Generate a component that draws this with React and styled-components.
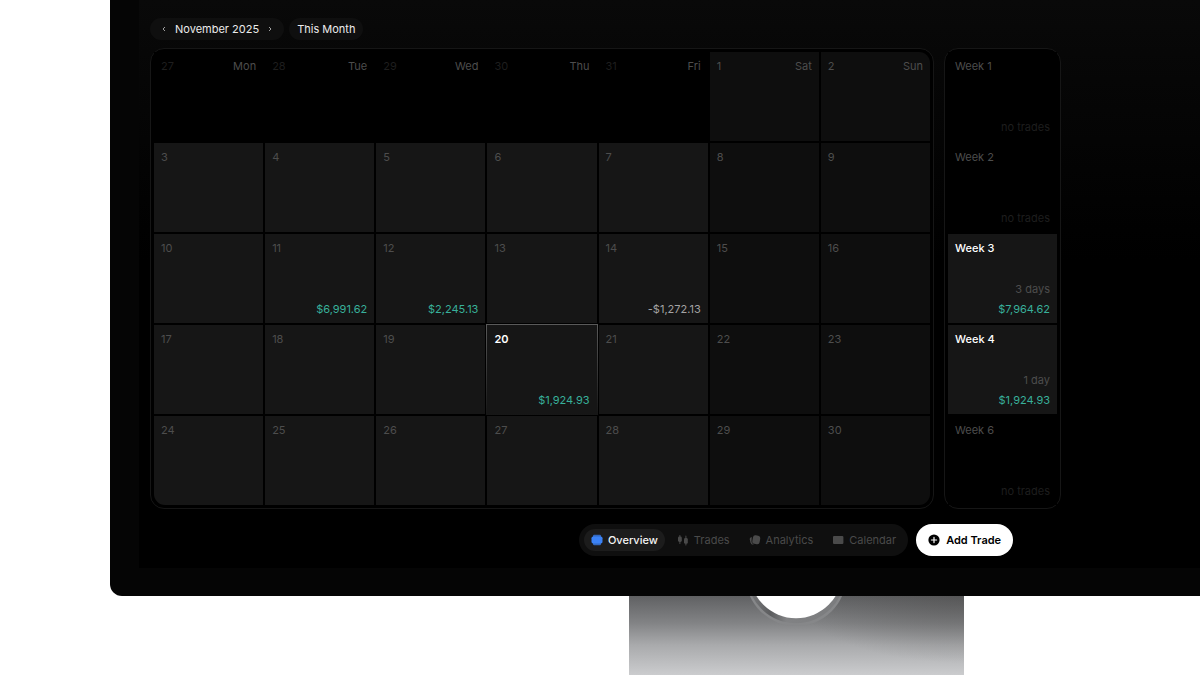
import React from "react";
import styled, { createGlobalStyle, css } from "styled-components";

const GlobalStyle = createGlobalStyle`
  *, *::before, *::after { box-sizing: border-box; }
  body {
    margin: 0;
    background: #fff;
    font-family: Inter, "Liberation Sans", sans-serif;
    font-size: 11px;
    line-height: 16px;
  }
  button { font: inherit; border: 0; cursor: pointer; }
  ol, ul { list-style: none; margin: 0; padding: 0; }
`;

const Page = styled.div`
  min-height: 100vh;
  overflow: hidden;
  display: flex;
  flex-direction: column;
`;

const Display = styled.div`
  flex: 1;
  display: flex;
  flex-direction: column;
  margin: 0 -282px 0 110px;
`;

const Bezel = styled.div`
  padding: 0 29px 28px;
  background: #050505;
  border-radius: 0 0 12px 12px;
`;

const Screen = styled.main`
  display: flex;
  flex-direction: column;
  padding: 18px 0 12px;
  background: linear-gradient(#090909 0, #060606 80px, #000 260px);
`;

const Toolbar = styled.header`
  display: flex;
  gap: 5px;
  padding: 0 11px;
  margin-bottom: 8px;
`;

const Pill = styled.div`
  display: flex;
  align-items: center;
  gap: 5px;
  height: 22px;
  padding: 0 8px;
  border-radius: 11px;
  background: #0f0f0f;
  color: #ececec;
`;

const Arrow = styled.button`
  display: flex;
  align-items: center;
  justify-content: center;
  width: 12px;
  height: 16px;
  padding: 0;
  background: none;
  color: #a0a0a0;
`;

const Board = styled.div`
  display: flex;
  gap: 10px;
  padding: 0 392px 0 11px;
`;

const Panel = styled.ol`
  && { padding: 3px; }
  display: grid;
  grid-auto-rows: 89px;
  gap: 2px;
  border: 1px solid #161616;
  border-radius: 14px;
  background: #000;
`;

const Month = styled(Panel)`
  flex: 1;
  grid-template-columns: repeat(7, minmax(0, 1fr));
`;

const Weeks = styled(Panel)`
  flex: 0 0 117px;
`;

const cellColors = { outside: "#000", weekday: "#161616", weekend: "#0e0e0e" };

const corners = {
  tr: "0 11px 0 0",
  bl: "0 0 0 11px",
  br: "0 0 11px 0",
};

const Cell = styled.li`
  display: flex;
  flex-direction: column;
  justify-content: space-between;
  padding: 6px 7px;
  background: ${(p) => cellColors[p.$kind]};
  border-radius: ${(p) => corners[p.$corner] || "0"};
  color: #4d4d4d;
  ${(p) =>
    p.$today &&
    css`
      background:
        linear-gradient(#161616, #161616) padding-box,
        linear-gradient(#5a5a5a, #161616) border-box;
      border: 1px solid transparent;
      margin: -1px;
    `}
`;

const CellHead = styled.div`
  display: flex;
  justify-content: space-between;
`;

const DayNumber = styled.time`
  color: ${(p) => (p.$today ? "#fff" : p.$dim ? "#1e1e1e" : "#4d4d4d")};
  font-weight: ${(p) => (p.$today ? 600 : 400)};
`;

const Weekday = styled.span`
  color: #4d4d4d;
`;

const Amount = styled.span`
  text-align: right;
  color: ${(p) => (p.$loss ? "#a3a3a3" : "#38b09a")};
`;

const WeekTitle = styled.span`
  color: ${(p) => (p.$active ? "#fff" : "#4d4d4d")};
  font-weight: ${(p) => (p.$active ? 500 : 400)};
`;

const WeekFoot = styled.div`
  display: flex;
  flex-direction: column;
  gap: 4px;
  text-align: right;
`;

const WeekNote = styled.span`
  color: ${(p) => (p.$active ? "#4d4d4d" : "#1e1e1e")};
`;

const Dock = styled.div`
  display: flex;
  justify-content: center;
  gap: 8px;
  margin-top: 15px;
`;

const Nav = styled.nav`
  display: flex;
  align-items: center;
  height: 32px;
  padding: 0 5px;
  gap: 5px;
  border-radius: 16px;
  background: #0f0f0f;
`;

const Tab = styled.button`
  display: flex;
  align-items: center;
  gap: 5px;
  height: 22px;
  padding: 0 7px;
  border-radius: 11px;
  background: ${(p) => (p.$active ? "#1c1c1c" : "transparent")};
  color: ${(p) => (p.$active ? "#f4f4f4" : "#4a4a4a")};
  font-weight: ${(p) => (p.$active ? 500 : 400)};
`;

const AddButton = styled.button`
  display: flex;
  align-items: center;
  gap: 6px;
  height: 32px;
  padding: 0 12px;
  border-radius: 16px;
  background: #fff;
  color: #000;
  font-weight: 600;
`;

const Stand = styled.div`
  flex: 1;
  align-self: center;
  display: flex;
  justify-content: center;
  align-items: flex-start;
  width: 335px;
  min-height: 79px;
  background:
    radial-gradient(ellipse 50% 85% at 100% 0, rgba(72, 71, 70, 0.4), transparent),
    linear-gradient(#606163, #828385 34%, #a9aaac 62%, #cbccce);
`;

const Chevron = ({ d }) => (
  <svg width="6" height="6" viewBox="0 0 6 6" fill="none" stroke="currentColor" aria-hidden="true">
    <path d={d} />
  </svg>
);

const OverviewIcon = () => (
  <svg width="12" height="12" viewBox="0 0 12 12" fill="#3b82f6" aria-hidden="true">
    <rect x="2" y="0.8" width="8" height="10.4" rx="1.2" opacity="0.75" />
    <rect x="0.5" y="2.6" width="11" height="6.8" rx="1.6" />
  </svg>
);

const TradesIcon = () => (
  <svg width="12" height="12" viewBox="0 0 12 12" fill="currentColor" aria-hidden="true">
    <rect x="1" y="2.5" width="3.8" height="5.5" rx="1.4" />
    <rect x="2.4" y="1" width="1" height="9" rx="0.5" />
    <rect x="7" y="4" width="3.8" height="5.8" rx="1.4" />
    <rect x="8.4" y="1.5" width="1" height="10" rx="0.5" />
  </svg>
);

const AnalyticsIcon = () => (
  <svg width="12" height="12" viewBox="0 0 12 12" fill="currentColor" aria-hidden="true">
    <rect x="3.6" y="1.4" width="7.4" height="8.6" rx="2.4" transform="rotate(10 7.3 5.7)" />
    <path d="M2.8 3Q.6 3.400.7 5L1.400 8.400Q2 10.800 4.800 10.700 2.400 9.600 2.500 7.200Z" />
  </svg>
);

const CalendarIcon = () => (
  <svg width="12" height="12" viewBox="0 0 12 12" fill="currentColor" aria-hidden="true">
    <rect x="1" y="2" width="10.4" height="8" rx="1" />
  </svg>
);

const PlusIcon = () => (
  <svg width="12" height="12" viewBox="0 0 12 12" aria-hidden="true">
    <circle cx="6" cy="6" r="5.6" fill="#000" />
    <path d="M6 3.4v5.2M3.4 6h5.2" stroke="#fff" strokeWidth="1.2" strokeLinecap="round" />
  </svg>
);

const StandHole = () => (
  <svg width="100" height="32" viewBox="0 0 100 32" aria-hidden="true">
    <defs>
      <linearGradient id="rim" x1="0" x2="1">
        <stop offset="0" stopColor="#77787a" />
        <stop offset="0.12" stopColor="#6c6d6f" />
        <stop offset="0.24" stopColor="#5c5d5f" />
        <stop offset="0.4" stopColor="#818284" />
        <stop offset="1" stopColor="#7a7b7d" />
      </linearGradient>
    </defs>
    <circle cx="50" cy="-20.5" r="50.5" fill="#868789" />
    <circle cx="50" cy="-21.8" r="49" fill="url(#rim)" />
    <circle cx="50" cy="-24.3" r="46.5" fill="#fff" />
  </svg>
);

const weekdays = ["Mon", "Tue", "Wed", "Thu", "Fri", "Sat", "Sun"];
const amounts = { 11: "$6,991.62", 12: "$2,245.13", 14: "-$1,272.13", 20: "$1,924.93" };
const cornerAt = { 6: "tr", 28: "bl", 34: "br" };
const TODAY = 20;

const days = Array.from({ length: 35 }, (_, i) => {
  const outside = i < 5;
  const day = outside ? 27 + i : i - 4;
  return {
    day,
    outside,
    weekday: weekdays[i],
    kind: outside ? "outside" : i % 7 > 4 ? "weekend" : "weekday",
    corner: cornerAt[i],
    amount: outside ? undefined : amounts[day],
    date: `2025-${outside ? "10" : "11"}-${String(day).padStart(2, "0")}`,
  };
});

const weeks = [
  { title: "Week 1", note: "no trades" },
  { title: "Week 2", note: "no trades" },
  { title: "Week 3", note: "3 days", amount: "$7,964.62" },
  { title: "Week 4", note: "1 day", amount: "$1,924.93" },
  { title: "Week 6", note: "no trades" },
];

const tabs = [
  { label: "Overview", Icon: OverviewIcon, active: true },
  { label: "Trades", Icon: TradesIcon },
  { label: "Analytics", Icon: AnalyticsIcon },
  { label: "Calendar", Icon: CalendarIcon },
];

function Day({ day, date, outside, weekday, kind, corner, amount }) {
  const today = !outside && day === TODAY;
  return (
    <Cell $kind={kind} $corner={corner} $today={today}>
      <CellHead>
        <DayNumber dateTime={date} $dim={outside} $today={today}>{day}</DayNumber>
        {weekday && <Weekday>{weekday}</Weekday>}
      </CellHead>
      {amount && <Amount $loss={amount.startsWith("-")}>{amount}</Amount>}
    </Cell>
  );
}

function Week({ title, note, amount }) {
  const active = Boolean(amount);
  return (
    <Cell $kind={active ? "weekday" : "outside"}>
      <WeekTitle $active={active}>{title}</WeekTitle>
      <WeekFoot>
        <WeekNote $active={active}>{note}</WeekNote>
        {amount && <Amount>{amount}</Amount>}
      </WeekFoot>
    </Cell>
  );
}

export default function App() {
  return (
    <Page>
      <GlobalStyle />
      <Display>
        <Bezel>
          <Screen>
            <Toolbar>
              <Pill>
                <Arrow aria-label="Previous month"><Chevron d="M4 1 2 3l2 2" /></Arrow>
                <span>November 2025</span>
                <Arrow aria-label="Next month"><Chevron d="m2 1 2 2-2 2" /></Arrow>
              </Pill>
              <Pill as="button">This Month</Pill>
            </Toolbar>
            <Board>
              <Month>{days.map((d) => <Day key={d.date} {...d} />)}</Month>
              <Weeks>{weeks.map((w) => <Week key={w.title} {...w} />)}</Weeks>
            </Board>
            <Dock>
              <Nav>
                {tabs.map(({ label, Icon, active }) => (
                  <Tab key={label} $active={active}><Icon />{label}</Tab>
                ))}
              </Nav>
              <AddButton><PlusIcon />Add Trade</AddButton>
            </Dock>
          </Screen>
        </Bezel>
        <Stand><StandHole /></Stand>
      </Display>
    </Page>
  );
}
